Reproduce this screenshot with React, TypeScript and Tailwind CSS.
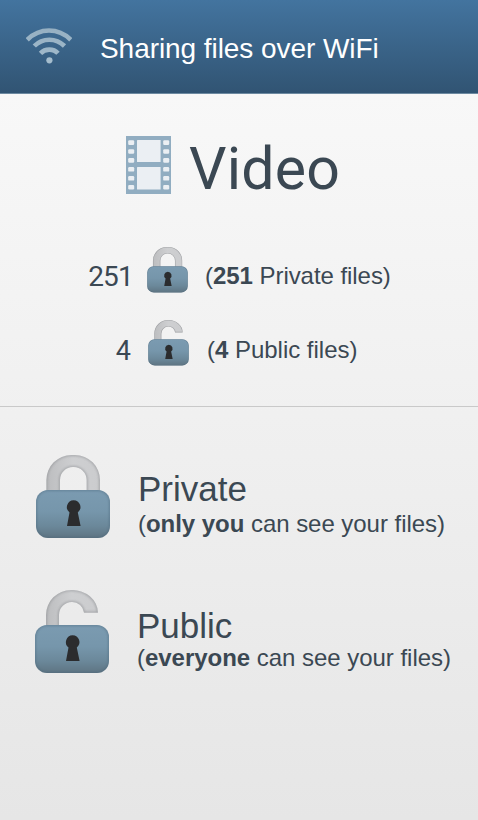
import React from "react";

function WifiIcon() {
  return (
    <svg width="46" height="36" viewBox="0 0 46 36" fill="none" className="-mt-px shrink-0">
      <defs>
        <linearGradient id="wifi" x1="0" y1="0" x2="0" y2="36" gradientUnits="userSpaceOnUse">
          <stop offset="0" stopColor="#96b0c2" />
          <stop offset="1" stopColor="#a2bbcc" />
        </linearGradient>
      </defs>
      <g stroke="url(#wifi)" strokeWidth="4.6">
        <path d="M1.200 11.800Q10.500 2.500 23 2.500T44.800 11.800" />
        <path d="M8.300 18Q14.500 11.700 23.300 11.700T38.500 18" />
        <path d="M14.500 25.300Q18 21.600 23.300 21.600T32 25.300" />
      </g>
      <circle cx="23.4" cy="32.3" r="3.1" fill="#a5bdcd" />
    </svg>
  );
}

const holes = [4.3, 13.2, 22.1, 31, 40, 48.9];

function FilmIcon() {
  return (
    <svg width="45" height="58" viewBox="0 0 45 58" className="shrink-0">
      <rect width="45" height="58" fill="#91adc1" />
      <g fill="#ebeff3">
        <rect x="11" y="4" width="23.6" height="22" rx="0.5" />
        <rect x="11" y="31" width="23.6" height="22.6" rx="0.5" />
        {holes.map((y) => (
          <React.Fragment key={y}>
            <rect x="2.2" y={y} width="6" height="4.6" rx="1.2" />
            <rect x="37.2" y={y} width="6" height="4.6" rx="1.2" />
          </React.Fragment>
        ))}
      </g>
    </svg>
  );
}

function LockIcon({ id, open = false, className }: { id: string; open?: boolean; className: string }) {
  const shackle = open
    ? "M11 40V25A25 25 0 0 1 36 0A26 23 0 0 1 63 22.700H49A12 12 0 0 0 37 12A13 13 0 0 0 24 25V40Z"
    : "M10.400 40V25A25 25 0 0 1 35.400 0H39A25 25 0 0 1 64 25V40H50.600V25A13 13 0 0 0 37.300 12A13 13 0 0 0 24 25V40Z";
  return (
    <svg viewBox="0 0 74 83" className={className}>
      <defs>
        <linearGradient id={id + "-body"} x1="0" y1="0" x2="0" y2="1">
          <stop offset="0" stopColor="#7b9bb1" />
          <stop offset="0.45" stopColor="#7696ab" />
          <stop offset="0.75" stopColor="#6b889a" />
          <stop offset="1" stopColor="#5e7482" />
        </linearGradient>
        <linearGradient id={id + "-metal"} x1="0" y1="0" x2="1" y2="0">
          <stop offset="0" stopColor="#bcbdbf" />
          <stop offset="0.5" stopColor="#cecfd1" />
          <stop offset="1" stopColor="#cbccce" />
        </linearGradient>
        <clipPath id={id + "-clip"}>
          <path d={shackle} />
        </clipPath>
        <clipPath id={id + "-bclip"}>
          <rect y="35" width="74" height="48" rx="12" />
        </clipPath>
        <filter id={id + "-soft"} x="-20%" y="-20%" width="140%" height="140%">
          <feGaussianBlur stdDeviation="1.3" />
        </filter>
      </defs>
      <path d={shackle} fill={`url(#${id}-metal)`} />
      <g clipPath={`url(#${id}-clip)`}>
        <path d={shackle} fill="none" stroke="#8f9194" strokeWidth="2.2" opacity="0.65" filter={`url(#${id}-soft)`} />
      </g>
      <rect y="35" width="74" height="48" rx="12" fill={`url(#${id}-body)`} />
      <g clipPath={`url(#${id}-bclip)`}>
        <rect y="35" width="74" height="48" rx="12" fill="none" stroke="#4d687b" strokeWidth="2" opacity="0.5" filter={`url(#${id}-soft)`} />
      </g>
      <path d="M37.600 45.200A6.900 6.900 0 0 1 41.800 57.500L44.600 71H31L33.500 57.500A6.900 6.900 0 0 1 37.600 45.200Z" fill="#2b2c2e" />
    </svg>
  );
}

export default function App() {
  return (
    <div className="flex h-[820px] w-[478px] flex-col overflow-hidden bg-[#f8f8f8] font-['Liberation_Sans',Arial,sans-serif] text-[#3b4853]">
      <header className="flex h-[94px] shrink-0 items-center border-b border-[#6d8aa1] bg-linear-to-b from-[#43749f] to-[#315473] pl-[26px]">
        <WifiIcon />
        <h1 className="mt-1 ml-7 text-[28px] leading-8 tracking-[-0.06px] whitespace-nowrap text-white">Sharing files over WiFi</h1>
      </header>
      <main className="flex flex-1 flex-col bg-linear-to-b from-[#f8f8f8] to-[#e6e6e6]">
        <section className="h-[313px] shrink-0 border-b border-[#c9c9c9] pt-[42px]">
          <div className="flex h-[58px] pl-[126px]">
            <FilmIcon />
            <h2 className="mt-1 ml-[18px] font-[Roboto,sans-serif] text-[59px] leading-[58px] tracking-[0.2px]">Video</h2>
          </div>
          <div className="mt-[53px] flex h-[46px] items-start">
            <span className="mt-3.5 w-[133px] text-right font-[Roboto,sans-serif] text-[28px] leading-8 tracking-[-0.8px]">251</span>
            <LockIcon id="s1" className="ml-3.5 h-[45.500px] w-[41px]" />
            <p className="mt-[13px] ml-[17px] text-[24px] leading-8 tracking-[-0.05px] whitespace-nowrap">(<b>251</b> Private files)</p>
          </div>
          <div className="mt-[27px] flex h-[46px] items-start">
            <span className="mt-[15px] w-[131px] text-right font-[Roboto,sans-serif] text-[27px] leading-8">4</span>
            <LockIcon id="s2" open className="ml-[17px] h-[45.500px] w-[41px]" />
            <p className="mt-3.5 ml-[18px] text-[24px] leading-8 tracking-[-0.02px] whitespace-nowrap">(<b>4</b> Public files)</p>
          </div>
        </section>
        <section className="flex flex-col gap-[52px] pt-12">
          <div className="flex h-[83px] items-start pl-9">
            <LockIcon id="l1" className="h-[83px] w-[74px] shrink-0" />
            <div className="mt-3.5 ml-7 whitespace-nowrap">
              <h3 className="text-[35px] leading-10">Private</h3>
              <p className="text-[24px] leading-[30px] tracking-[-0.04px]">(<b>only you</b> can see your files)</p>
            </div>
          </div>
          <div className="flex h-[83px] items-start pl-[35px]">
            <LockIcon id="l2" open className="h-[83px] w-[74px] shrink-0" />
            <div className="mt-4 ml-7 whitespace-nowrap">
              <h3 className="text-[35px] leading-10">Public</h3>
              <p className="text-[24px] leading-[24px] tracking-[-0.03px]">(<b>everyone</b> can see your files)</p>
            </div>
          </div>
        </section>
      </main>
    </div>
  );
}
